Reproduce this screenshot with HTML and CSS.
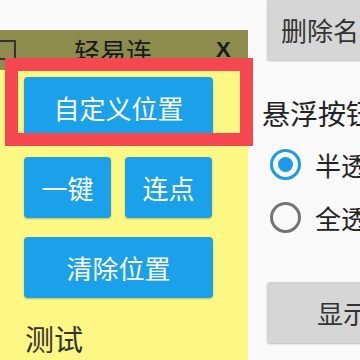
FILE: index.html
```html
<!DOCTYPE html>
<html lang="zh-CN">
<head>
<meta charset="UTF-8">
<meta name="viewport" content="width=device-width, initial-scale=1.0">
<title>轻易连</title>
<link rel="stylesheet" href="styles.css">
</head>
<body>
<div class="app">
    <div class="gray-btn del-btn">删除名称</div>
    <div class="section-title">悬浮按钮样式</div>
    <div class="radio-row">
        <span class="radio checked"></span>
        半透明
    </div>
    <div class="radio-row">
        <span class="radio"></span>
        全透明
    </div>
    <div class="gray-btn show-btn">显示悬浮</div>
</div>

<div class="float-panel">
    <div class="title-bar">
        <span class="min-box"></span>
        <span class="title">轻易连</span>
        <span class="close">X</span>
    </div>
    <div class="panel-body">
        <div class="blue-btn">自定义位置</div>
        <div class="btn-row">
            <div class="blue-btn">一键</div>
            <div class="blue-btn">连点</div>
        </div>
        <div class="blue-btn">清除位置</div>
        <div class="test-label">测试</div>
    </div>
    <!-- highlight frame drawn over the first button -->
    <div class="highlight"></div>
</div>
</body>
</html>
```

FILE: styles.css
```css
body {
  margin: 0;
  width: 360px;
  height: 360px;
  overflow: hidden;
  position: relative;
  background-color: #fafafa;
  color: #333;
  font-family: Roboto, "Noto Sans CJK SC", sans-serif;
}

.app {
  padding-left: 267px;
}

.gray-btn {
  width: 200px;
  background-color: #d6d6d6;
  border-radius: 3px;
  box-shadow: 0 1px 2px rgba(0, 0, 0, 0.25);
  font-size: 26px;
  color: #333;
  white-space: nowrap;
  display: flex;
  align-items: center;
  padding-left: 14px;
  box-sizing: border-box;
}

.del-btn {
  margin-top: -2px;
  height: 62px;
}

.section-title {
  margin-top: 36px;
  margin-left: -5px;
  height: 40px;
  line-height: 40px;
  font-size: 28px;
  color: #222;
  white-space: nowrap;
}

.radio-row {
  height: 53px;
  display: flex;
  align-items: center;
  gap: 14px;
  margin-left: 3px;
  font-size: 26px;
  color: #222;
  white-space: nowrap;
}

.section-title + .radio-row {
  margin-top: 2px;
}

.radio {
  flex-shrink: 0;
  width: 31px;
  height: 31px;
  border: 3px solid #757575;
  border-radius: 50%;
  box-sizing: border-box;
  display: flex;
  align-items: center;
  justify-content: center;
}

.radio.checked {
  border-color: #1e9be8;
}

.radio.checked::after {
  content: "";
  width: 15px;
  height: 15px;
  border-radius: 50%;
  background-color: #1e9be8;
}

.show-btn {
  margin-top: 38px;
  height: 61px;
  padding-left: 50px;
}

.float-panel {
  position: absolute;
  left: 0;
  top: 30px;
  width: 248px;
  height: 330px;
  background-color: #fdf784;
}

.title-bar {
  height: 40px;
  background-color: #8e8c4c;
  display: flex;
  align-items: center;
  color: #1a1a1a;
}

.min-box {
  width: 20px;
  height: 20px;
  margin-left: -4px;
  border: 2px solid #333;
  box-sizing: border-box;
}

.title {
  margin-left: 58px;
  font-size: 26px;
  font-family: "Noto Sans CJK SC", sans-serif;
}

.close {
  margin-left: 64px;
  font-size: 22px;
  font-weight: bold;
  font-family: "Liberation Sans", sans-serif;
}

.panel-body {
  padding: 7px 0 0 24px;
}

.blue-btn {
  width: 189px;
  height: 61px;
  margin-bottom: 19px;
  background-color: #1ba0ea;
  color: #fff;
  border-radius: 4px;
  box-shadow: 0 1px 2px rgba(0, 0, 0, 0.25);
  font-size: 26px;
  display: flex;
  align-items: center;
  justify-content: center;
}

.btn-row {
  display: flex;
  gap: 14px;
}

.btn-row .blue-btn {
  width: 87px;
}

.test-label {
  margin-top: 12px;
  margin-left: 1px;
  font-size: 29px;
  color: #333;
}

.highlight {
  position: absolute;
  left: 5px;
  top: 28px;
  width: 248px;
  height: 88px;
  border: 13px solid #f5474f;
  box-sizing: border-box;
}
```
